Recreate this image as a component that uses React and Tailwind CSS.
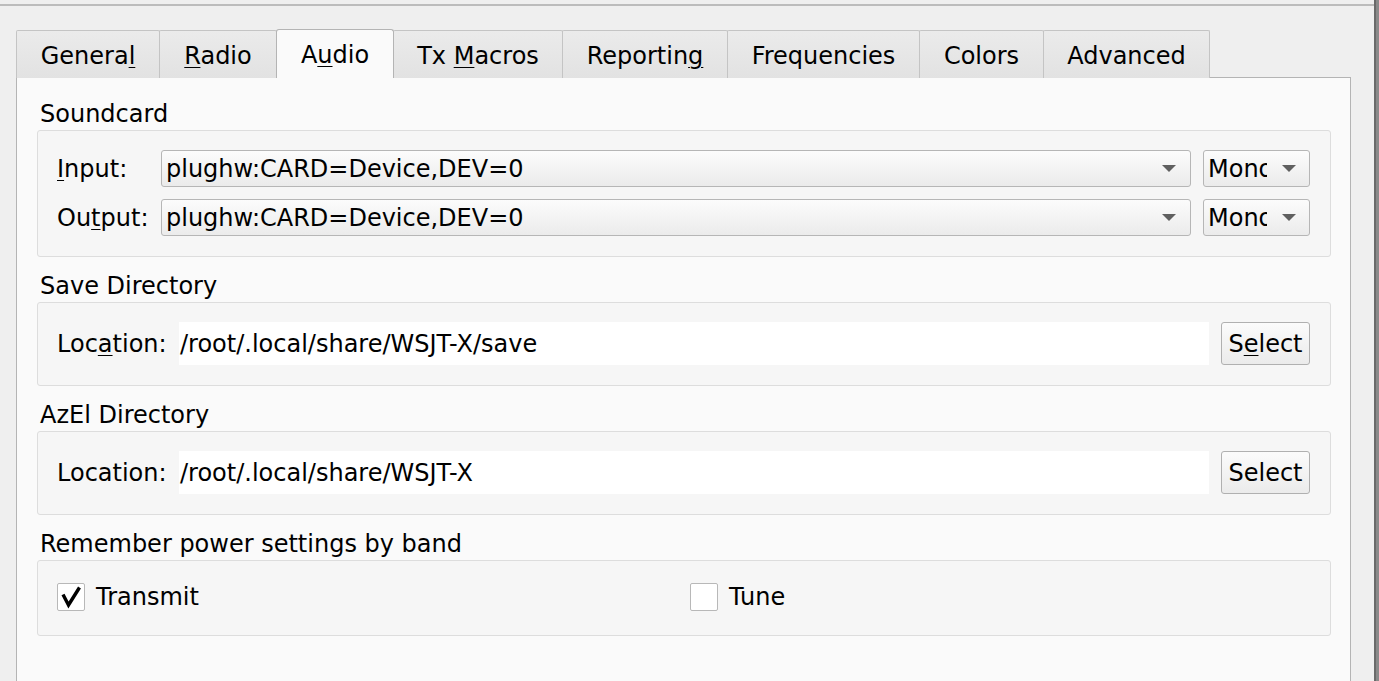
import { Fragment } from 'react';

// mnemonic underline, as Qt draws it under the accelerator letter
function Mn({ children }) {
  return <span className="underline decoration-1 underline-offset-[3px]">{children}</span>;
}

const tabs = [
  { id: 'general', w: 'w-[144px]', label: <>Genera<Mn>l</Mn></> },
  { id: 'radio', w: 'w-[118px]', label: <><Mn>R</Mn>adio</> },
  { id: 'audio', w: 'w-[118px]', label: <>A<Mn>u</Mn>dio</> },
  { id: 'txmacros', w: 'w-[170px]', label: <>Tx <Mn>M</Mn>acros</> },
  { id: 'reporting', w: 'w-[166px]', label: <>Reportin<Mn>g</Mn></> },
  { id: 'frequencies', w: 'w-[193px]', label: <>Frequencies</> },
  { id: 'colors', w: 'w-[125px]', label: <>Colors</> },
  { id: 'advanced', w: 'w-[167px]', label: <>Advanced</> },
];

function Arrow() {
  return (
    <svg width="14" height="7" viewBox="0 0 14 7" className="shrink-0">
      <polygon points="0,0 14,0 7,7" fill="#606060" />
    </svg>
  );
}

function Combo({ value }) {
  return (
    <div className="flex h-[37px] flex-1 items-center rounded-[3px] border border-[#b6b6b6] bg-linear-to-b from-[#fcfcfc] to-[#ebebeb] pl-[4px] pr-[14px]">
      <span className="whitespace-nowrap">{value}</span>
      <span className="ml-auto"><Arrow /></span>
    </div>
  );
}

function SmallCombo({ value }) {
  return (
    <div className="flex h-[37px] w-[107px] items-center rounded-[3px] border border-[#b6b6b6] bg-linear-to-b from-[#fcfcfc] to-[#ebebeb] pl-[4px] pr-[13px]">
      <span className="w-[59px] overflow-hidden whitespace-nowrap">{value}</span>
      <span className="ml-auto"><Arrow /></span>
    </div>
  );
}

function Button({ children }) {
  return (
    <div className="flex h-[43px] w-[89px] items-center justify-center rounded-[3px] border border-[#b0b0b0] bg-linear-to-b from-[#fbfbfb] to-[#ebebeb]">
      {children}
    </div>
  );
}

function Section({ title, first, children }) {
  return (
    <div className={first ? 'mt-[22px]' : 'mt-[15px]'}>
      <div className="h-[28px] pl-[3px]">{title}</div>
      <div className="mt-[2px] rounded-[3px] border border-[#dddddd] bg-[#f6f6f6]">{children}</div>
    </div>
  );
}

function DirRow({ label, path, button }) {
  return (
    <div className="flex items-center gap-[12px] pb-[20px] pl-[19px] pr-[20px] pt-[19px]">
      <span className="w-[110px] whitespace-nowrap">{label}</span>
      <div className="flex h-[43px] flex-1 items-center bg-white pl-[1px]">{path}</div>
      <Button>{button}</Button>
    </div>
  );
}

function Check({ checked, label }) {
  return (
    <div className="flex h-[28px] items-center">
      <div className="flex size-[28px] items-center justify-center rounded-[2px] border border-[#b8b8b8] bg-white">
        {checked && (
          <svg width="26" height="26" viewBox="1 1 26 26">
            <polyline points="6,11.5 11.5,22 22.5,4.5" fill="none" stroke="#000" strokeWidth="3.4" strokeLinejoin="miter" />
          </svg>
        )}
      </div>
      <span className="ml-[11px]">{label}</span>
    </div>
  );
}

export default function App() {
  const current = 'audio';

  return (
    <div className="flex h-[681px] w-[1379px] overflow-hidden bg-[#efefef] font-['DejaVu_Sans',sans-serif] text-[24px] leading-[28px] text-black">
      <div className="flex flex-1 flex-col">
        <div className="mt-[4px] h-[2px] bg-[#bcbcbc]" />

        {/* Tab bar */}
        <div className="relative z-10 mt-[23px] flex h-[49px] items-end pl-[16px]">
          {tabs.map((t, i) => {
            const sel = t.id === current;
            return (
              <div
                key={t.id}
                className={`flex items-center justify-center border-x border-t whitespace-nowrap ${t.w} ${i > 0 ? '-ml-px' : ''} ${
                  sel
                    ? 'relative z-10 h-[49px] rounded-t-[3px] border-[#b4b4b4] bg-[#fafafa] pt-[2px]'
                    : 'h-[48px] rounded-t-[2px] border-[#c4c4c4] bg-linear-to-b from-[#ebebeb] to-[#e2e2e2] pt-[3px]'
                }`}
              >
                <span>{t.label}</span>
              </div>
            );
          })}
        </div>

        {/* Tab pane */}
        <div className="-mt-px ml-[16px] w-[1335px] flex-1 border border-b-0 border-[#b4b4b4] bg-[#fafafa] pl-[20px] pr-[19px]">
          <Section title="Soundcard" first>
            <div className="flex flex-col gap-[12px] pb-[20px] pl-[19px] pr-[20px] pt-[19px]">
              {[
                { label: <><Mn>I</Mn>nput:</>, key: 'in' },
                { label: <>Ou<Mn>t</Mn>put:</>, key: 'out' },
              ].map((r) => (
                <div key={r.key} className="flex items-center">
                  <span className="w-[104px] whitespace-nowrap">{r.label}</span>
                  <div className="flex flex-1 gap-[12px]">
                    <Combo value="plughw:CARD=Device,DEV=0" />
                    <SmallCombo value="Mono" />
                  </div>
                </div>
              ))}
            </div>
          </Section>

          <Section title="Save Directory">
            <DirRow label={<>Loc<Mn>a</Mn>tion:</>} path="/root/.local/share/WSJT-X/save" button={<>S<Mn>e</Mn>lect</>} />
          </Section>

          <Section title="AzEl Directory">
            <DirRow label="Location:" path="/root/.local/share/WSJT-X" button="Select" />
          </Section>

          <Section title="Remember power settings by band">
            <div className="flex pb-[24px] pl-[19px] pt-[22px]">
              <div className="w-[633px]">
                <Check checked label="Transmit" />
              </div>
              <Check label="Tune" />
            </div>
          </Section>
        </div>
      </div>
      <div className="w-[5px] border-l-2 border-[#6a6a6a] bg-[#8a8a8a]" />
    </div>
  );
}
